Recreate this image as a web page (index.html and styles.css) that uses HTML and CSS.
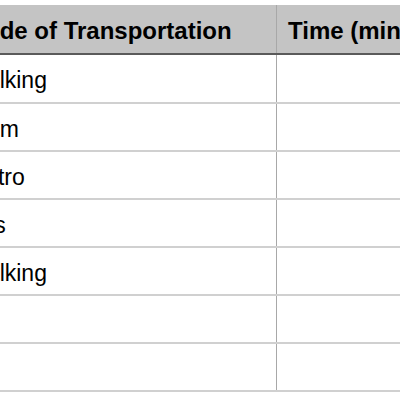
FILE: index.html
```html
<!DOCTYPE html>
<html>
<head>
<meta charset="utf-8">
<link rel="stylesheet" href="styles.css">
</head>
<body>
<table class="grid">
  <thead>
    <tr>
      <th class="c1">Mode of Transportation</th>
      <th class="c2">Time (minutes)</th>
    </tr>
  </thead>
  <tbody>
    <tr class="first"><td class="c1">Walking</td><td class="c2"></td></tr>
    <tr><td class="c1">Tram</td><td class="c2"></td></tr>
    <tr><td class="c1">Metro</td><td class="c2"></td></tr>
    <tr><td class="c1">Bus</td><td class="c2"></td></tr>
    <tr><td class="c1">Walking</td><td class="c2"></td></tr>
    <tr><td class="c1"></td><td class="c2"></td></tr>
    <tr><td class="c1"></td><td class="c2"></td></tr>
  </tbody>
</table>
</body>
</html>
```
FILE: styles.css
```css
html, body {
  margin: 0;
  padding: 0;
  background: #ffffff;
  overflow: hidden;
}
.grid {
  border-collapse: collapse;
  margin-top: 5px;
  margin-left: -46px;
  font-family: "Liberation Sans", Arial, sans-serif;
  color: #000;
  table-layout: fixed;
  width: 580px;
}
.grid th, .grid td {
  text-align: left;
  white-space: nowrap;
  overflow: hidden;
}
.grid .c1 { width: 300px; border-right: 1px solid #a8a8a8; }
.grid .c2 { width: 236px; }
.grid th {
  background: #c4c4c4;
  font-weight: bold;
  font-size: 24px;
  height: 44px;
  padding: 4px 11px 0;
  border-bottom: 2px solid #5a5a5a;
}
.grid td {
  font-size: 23px;
  height: 42px;
  padding: 4px 11px 0 12px;
  border-bottom: 2px solid #d0d0d0;
}
.grid .first td { height: 43px; }
```
